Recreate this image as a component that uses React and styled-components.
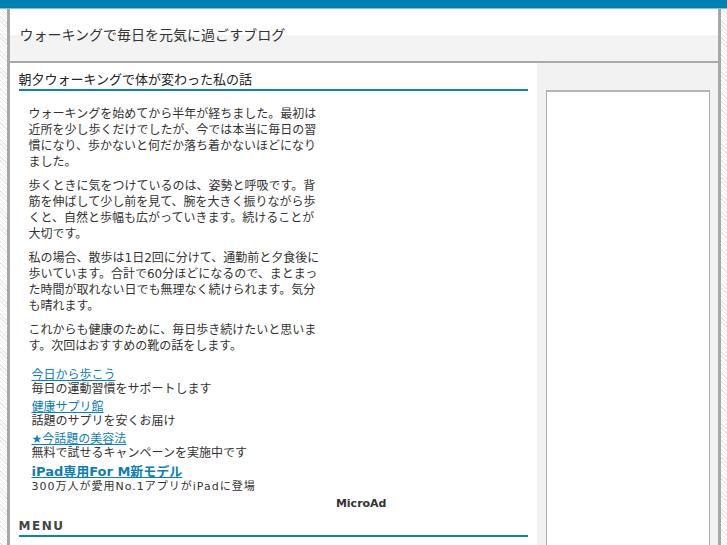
import styled, { createGlobalStyle } from "styled-components";

const GlobalStyle = createGlobalStyle`
  html, body {
    margin: 0;
    padding: 0;
  }
  body {
    font-family: "DejaVu Sans", "Noto Sans CJK JP", sans-serif;
    color: #333;
    background: repeating-linear-gradient(45deg, #fff 0 2px, #e8e8e8 2px 3px);
  }
`;

const TopBar = styled.div`
  height: 8px;
  background: #0080b3;
  border-bottom: 1px solid #7cc0de;
`;

const Page = styled.div`
  width: 708px;
  margin: 0 auto;
  border-left: 3px solid #a8a8a8;
  border-right: 3px solid #a8a8a8;
  background: #fff;
`;

const Header = styled.header`
  height: 54px;
  background: linear-gradient(#fff 0 26px, #f3f3f3 26px);
  border-bottom: 2px solid #a9a9a9;
  padding: 0 10px;
  box-sizing: border-box;
`;

const SiteTitle = styled.h1`
  margin: 0;
  padding-top: 16px;
  font-size: 14px;
  line-height: 20px;
  font-weight: normal;
  color: #333;
`;

const Columns = styled.div`
  display: flex;
  min-height: 490px;
`;

const Main = styled.main`
  width: 527px;
  padding: 0 9px;
  box-sizing: border-box;
`;

const EntryTitle = styled.h2`
  margin: 9px 0 0;
  padding-bottom: 1px;
  font-size: 13px;
  line-height: 16px;
  font-weight: normal;
  color: #222;
  border-bottom: 2px solid #0a82bb;
`;

const Entry = styled.div`
  padding: 15px 0 0 10px;
`;

const Para = styled.p`
  margin: 0 0 8px;
  max-width: 292px;
  font-size: 12px;
  line-height: 16px;
  color: #333;
`;

const AdList = styled.div`
  width: 355px;
  margin: 14px 0 0 13px;
`;

const AdItem = styled.div`
  margin-bottom: 3px;
`;

const AdLink = styled.a`
  display: block;
  font-size: ${(p) => (p.$large ? "13px" : "12px")};
  font-weight: ${(p) => (p.$large ? "bold" : "normal")};
  line-height: ${(p) => (p.$large ? "16px" : "14px")};
  color: #0a7fb8;
  text-decoration: underline;
`;

const AdText = styled.div`
  font-size: ${(p) => (p.$small ? "11px" : "12px")};
  letter-spacing: ${(p) => (p.$small ? "1px" : "0")};
  line-height: ${(p) => (p.$small ? "14px" : "15px")};
  color: #333;
`;

const AdCredit = styled.div`
  text-align: right;
  font-size: 11px;
  font-weight: bold;
  line-height: 13px;
  color: #333;
`;

const MenuTitle = styled.h3`
  margin: 8px 0 0;
  padding-bottom: 1px;
  font-size: 12px;
  line-height: 16px;
  letter-spacing: 1.5px;
  font-weight: bold;
  color: #444;
  border-bottom: 2px solid #0a82bb;
`;

const Sidebar = styled.aside`
  flex: 1;
  background: #f2f2f2;
  padding: 27px 8px 0 9px;
`;

const SideBox = styled.div`
  height: 470px;
  background: #fff;
  border: 1px solid #aaa;
  border-top: 2px solid #b5b5b5;
`;

const ads = [
  { title: "今日から歩こう", text: "毎日の運動習慣をサポートします" },
  { title: "健康サプリ館", text: "話題のサプリを安くお届け" },
  { title: "★今話題の美容法", text: "無料で試せるキャンペーンを実施中です" },
  { title: "iPad専用For M新モデル", text: "300万人が愛用No.1アプリがiPadに登場", large: true },
];

export default function App() {
  return (
    <>
      <GlobalStyle />
      <TopBar />
      <Page>
        <Header>
          <SiteTitle>ウォーキングで毎日を元気に過ごすブログ</SiteTitle>
        </Header>
        <Columns>
          <Main>
            <EntryTitle>朝夕ウォーキングで体が変わった私の話</EntryTitle>
            <Entry>
              <Para>
                ウォーキングを始めてから半年が経ちました。最初は近所を少し歩くだけでしたが、今では本当に毎日の習慣になり、歩かないと何だか落ち着かないほどになりました。
              </Para>
              <Para>
                歩くときに気をつけているのは、姿勢と呼吸です。背筋を伸ばして少し前を見て、腕を大きく振りながら歩くと、自然と歩幅も広がっていきます。続けることが大切です。
              </Para>
              <Para>
                私の場合、散歩は1日2回に分けて、通勤前と夕食後に歩いています。合計で60分ほどになるので、まとまった時間が取れない日でも無理なく続けられます。気分も晴れます。
              </Para>
              <Para>
                これからも健康のために、毎日歩き続けたいと思います。次回はおすすめの靴の話をします。
              </Para>
            </Entry>
            <AdList>
              {ads.map((ad) => (
                <AdItem key={ad.title}>
                  <AdLink href="#" $large={ad.large}>{ad.title}</AdLink>
                  <AdText $small={ad.large}>{ad.text}</AdText>
                </AdItem>
              ))}
              <AdCredit>MicroAd</AdCredit>
            </AdList>
            <MenuTitle>MENU</MenuTitle>
          </Main>
          <Sidebar>
            <SideBox />
          </Sidebar>
        </Columns>
      </Page>
    </>
  );
}
